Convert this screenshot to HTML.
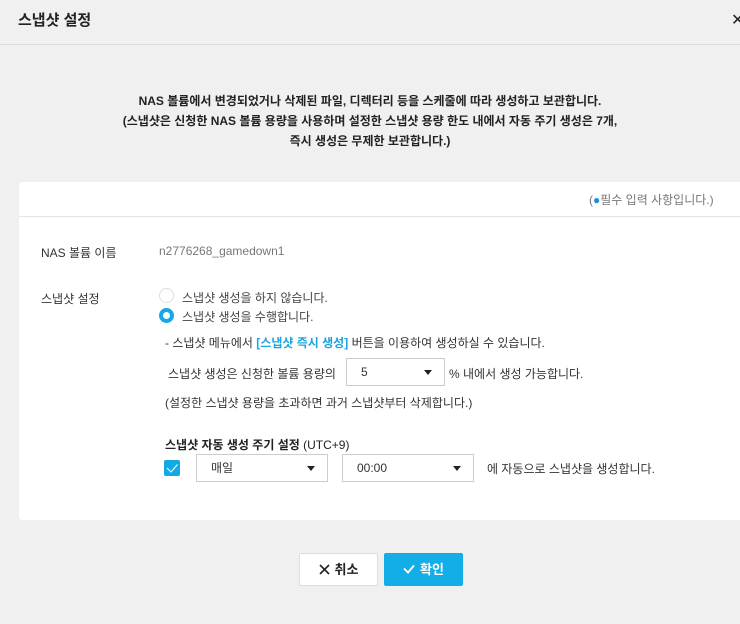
<!DOCTYPE html><html><head><meta charset="utf-8"><style>
*{margin:0;padding:0;box-sizing:border-box}
body{width:740px;height:624px;background:#f0f0f0;font-family:"Liberation Sans","Noto Sans CJK KR",sans-serif;color:#333;position:relative;overflow:hidden;font-size:12px}
.a{position:absolute;white-space:nowrap}
.sel{position:absolute;background:#fff;border:1px solid #ccc;height:28px;font-size:12px;line-height:26px;padding-left:14px;color:#333}
.sel:after{content:"";position:absolute;right:12px;top:11px;border-left:4px solid transparent;border-right:4px solid transparent;border-top:5px solid #222}
</style></head><body>
<div class="a" style="left:18px;top:9px;font-size:15px;font-weight:bold;color:#222">스냅샷 설정</div>
<div class="a" style="left:731px;top:10px;font-size:16px;color:#222">✕</div>
<div class="a" style="left:0;top:44px;width:740px;border-top:1px solid #ddd"></div>
<div class="a" style="left:0;top:91px;width:740px;text-align:center;font-size:12px;font-weight:bold;line-height:20px;color:#222">NAS 볼륨에서 변경되었거나 삭제된 파일, 디렉터리 등을 스케줄에 따라 생성하고 보관합니다.<br>(스냅샷은 신청한 NAS 볼륨 용량을 사용하며 설정한 스냅샷 용량 한도 내에서 자동 주기 생성은 7개,<br>즉시 생성은 무제한 보관합니다.)</div>
<div class="a" style="left:19px;top:182px;width:730px;height:338px;background:#fff;border-radius:3px"></div>
<div class="a" style="left:19px;top:216px;width:730px;border-top:1px solid #e4e4e4"></div>
<div class="a" style="left:589px;top:191px;color:#777">(<span style="color:#1a8fdd">●</span>필수 입력 사항입니다.)</div>
<div class="a" style="left:41px;top:244px;color:#333">NAS 볼륨 이름</div>
<div class="a" style="left:159px;top:244px;color:#777">n2776268_gamedown1</div>
<div class="a" style="left:41px;top:290px">스냅샷 설정</div>
<div class="a" style="left:159px;top:288px;width:15px;height:15px;border:1px solid #ddd;border-radius:50%"></div>
<div class="a" style="left:182px;top:289px;color:#444">스냅샷 생성을 하지 않습니다.</div>
<div class="a" style="left:159px;top:308px;width:15px;height:15px;border:4px solid #13a9e5;border-radius:50%"></div>
<div class="a" style="left:182px;top:308px;color:#444">스냅샷 생성을 수행합니다.</div>
<div class="a" style="left:165px;top:334px;color:#333">- 스냅샷 메뉴에서 <b style="color:#1ba4e0">[스냅샷 즉시 생성]</b> 버튼을 이용하여 생성하실 수 있습니다.</div>
<div class="a" style="left:168px;top:365px">스냅샷 생성은 신청한 볼륨 용량의</div>
<div class="sel" style="left:346px;top:358px;width:99px">5</div>
<div class="a" style="left:449px;top:365px">% 내에서 생성 가능합니다.</div>
<div class="a" style="left:165px;top:394px">(설정한 스냅샷 용량을 초과하면 과거 스냅샷부터 삭제합니다.)</div>
<div class="a" style="left:165px;top:436px;color:#222"><b>스냅샷 자동 생성 주기 설정</b> (UTC+9)</div>
<div class="a" style="left:164px;top:460px;width:16px;height:16px;background:#13a9e5;border-radius:2px"><svg width="16" height="16"><path d="M3 8l4 4L13.5 4.5" stroke="#fff" stroke-width="1" fill="none"/></svg></div>
<div class="sel" style="left:196px;top:454px;width:132px">매일</div>
<div class="sel" style="left:342px;top:454px;width:132px">00:00</div>
<div class="a" style="left:487px;top:460px">에 자동으로 스냅샷을 생성합니다.</div>
<div class="a" style="left:299px;top:553px;width:79px;height:33px;background:#fff;border:1px solid #ddd;border-radius:2px;text-align:center;line-height:31px;font-size:13px;font-weight:bold;color:#222"><svg width="11" height="11" style="vertical-align:-1px;margin-right:5px"><path d="M1 1L10 10M10 1L1 10" stroke="#222" stroke-width="1.6"/></svg>취소</div>
<div class="a" style="left:384px;top:553px;width:79px;height:33px;background:#13aee8;border-radius:2px;text-align:center;line-height:33px;font-size:13px;font-weight:bold;color:#fff"><svg width="12" height="10" style="vertical-align:0;margin-right:5px"><path d="M1 4.5l4 4L11 1.5" stroke="#fff" stroke-width="1.8" fill="none"/></svg>확인</div>
</body></html>
